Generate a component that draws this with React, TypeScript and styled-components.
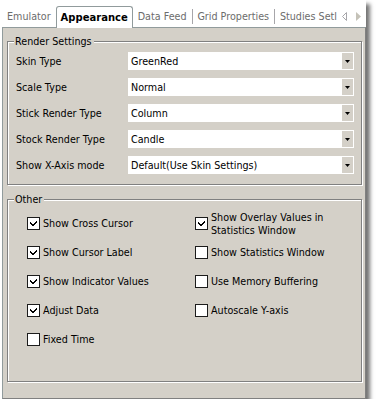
import React from 'react';
import styled, { createGlobalStyle } from 'styled-components';

const GlobalStyle = createGlobalStyle`
  html, body {
    margin: 0;
    padding: 0;
    background: #ffffff;
  }
  body {
    font-family: "DejaVu Sans", "Liberation Sans", sans-serif;
    font-size: 9.6px;
    color: #000;
  }
`;

const Window = styled.div`
  width: 366px;
  height: 399px;
  display: flex;
  flex-direction: column;
  background: #ffffff;
  box-shadow: 4px 4px 4px rgba(0, 0, 0, 0.55);
`;

const TabStrip = styled.div`
  height: 27px;
  display: flex;
  align-items: flex-end;
  padding-left: 2px;
  box-sizing: border-box;
`;

const Tab = styled.div`
  height: 21px;
  display: flex;
  align-items: center;
  padding: 0 5px;
  color: #6c6c6c;
  white-space: nowrap;
  box-sizing: border-box;
`;

const ActiveTab = styled.div`
  height: 22px;
  display: flex;
  align-items: center;
  padding: 0 4px 1px;
  background: #ffffff;
  border: 1px solid #919b9c;
  border-bottom: none;
  border-radius: 3px 3px 0 0;
  font-weight: bold;
  font-size: 10px;
  color: #000;
  box-sizing: border-box;
  margin-bottom: -1px;
  position: relative;
  z-index: 1;
`;

const TabSep = styled.div`
  width: 1px;
  height: 15px;
  margin-bottom: 3px;
  background: #a7a6aa;
`;

const Scroller = styled.div`
  margin-left: auto;
  display: flex;
  gap: 9px;
  align-items: center;
  height: 21px;
  padding-right: 5px;
`;

const Panel = styled.div`
  flex: 1;
  margin-left: 2px;
  background: #d4d0c8;
  border: 1px solid #919b9c;
  border-right-color: #808080;
  border-bottom-color: #808080;
  padding: 0 3px 0 4px;
  box-sizing: border-box;
`;

const Group = styled.div<{ $top: number; $height: number }>`
  position: relative;
  margin-top: ${(p) => p.$top}px;
  height: ${(p) => p.$height}px;
  width: 355px;
  box-sizing: border-box;
  border: 1px solid #808080;
  box-shadow: 1px 1px 0 #ffffff, inset 1px 1px 0 #ffffff;
`;

const Legend = styled.span`
  position: absolute;
  top: -7px;
  left: 6px;
  padding: 0 2px 0 1px;
  background: #d4d0c8;
  line-height: 13px;
`;

const FieldGrid = styled.div`
  display: grid;
  grid-template-columns: 112px 226px;
  row-gap: 8px;
  padding: 10px 0 0 8px;
`;

const Label = styled.div`
  height: 18px;
  display: flex;
  align-items: center;
`;

const Combo = styled.div`
  height: 18px;
  background: #ffffff;
  display: flex;
  align-items: center;
  padding: 1px 1px 1px 3px;
  box-sizing: border-box;
`;

const ComboText = styled.span`
  flex: 1;
  white-space: nowrap;
  overflow: hidden;
`;

const DropButton = styled.div`
  width: 11px;
  height: 100%;
  background: #d4d0c8;
  display: flex;
  align-items: center;
  justify-content: center;
`;

const CheckGrid = styled.div`
  display: grid;
  grid-template-columns: 168px 1fr;
  grid-auto-rows: 29px;
  padding: 9px 0 0 19px;
`;

const CheckItem = styled.div`
  display: flex;
  align-items: center;
  gap: 3px;
  line-height: 13px;
`;

const Combos = [
  ['Skin Type', 'GreenRed'],
  ['Scale Type', 'Normal'],
  ['Stick Render Type', 'Column'],
  ['Stock Render Type', 'Candle'],
  ['Show X-Axis mode', 'Default(Use Skin Settings)'],
];

const Checks: [React.ReactNode, boolean][] = [
  ['Show Cross Cursor', true],
  [<>Show Overlay Values in<br />Statistics Window</>, true],
  ['Show Cursor Label', true],
  ['Show Statistics Window', false],
  ['Show Indicator Values', true],
  ['Use Memory Buffering', false],
  ['Adjust Data', true],
  ['Autoscale Y-axis', false],
  ['Fixed Time', false],
];

const Box: React.FC<{ checked: boolean }> = ({ checked }) => (
  <svg width="13" height="13" viewBox="0 0 13 13" style={{ flex: 'none' }}>
    <rect x="0.5" y="0.5" width="12" height="12" fill="#fff" stroke="#1c1c1c" />
    {checked && (
      <path d="M3 5v2l2 2h1l4-4V3L6 7H5L3 5z" fill="#000" shapeRendering="crispEdges" />
    )}
  </svg>
);

const Arrow: React.FC<{ left?: boolean }> = ({ left }) => (
  <svg width="5" height="9" viewBox="0 0 5 9">
    {left ? (
      <path d="M4.5 0.5L0.5 4.5L4.5 8.5Z" fill="none" stroke="#a7a6aa" />
    ) : (
      <path d="M0 0L5 4.5L0 9Z" fill="#c5c2b8" />
    )}
  </svg>
);

export default function App() {
  return (
    <>
      <GlobalStyle />
      <Window>
        <TabStrip>
          <Tab>Emulator</Tab>
          <ActiveTab>Appearance</ActiveTab>
          <Tab>Data Feed</Tab>
          <TabSep />
          <Tab>Grid Properties</Tab>
          <TabSep />
          <Tab>Studies Setl</Tab>
          <Scroller>
            <Arrow left />
            <Arrow />
          </Scroller>
        </TabStrip>
        <Panel>
          <Group $top={13} $height={144}>
            <Legend>Render Settings</Legend>
            <FieldGrid>
              {Combos.map(([label, value]) => (
                <React.Fragment key={label}>
                  <Label>{label}</Label>
                  <Combo>
                    <ComboText>{value}</ComboText>
                    <DropButton>
                      <svg width="5" height="3" viewBox="0 0 5 3">
                        <path d="M0 0h5L2.5 3z" fill="#000" />
                      </svg>
                    </DropButton>
                  </Combo>
                </React.Fragment>
              ))}
            </FieldGrid>
          </Group>
          <Group $top={14} $height={183}>
            <Legend>Other</Legend>
            <CheckGrid>
              {Checks.map(([text, checked], i) => (
                <CheckItem key={i}>
                  <Box checked={checked} />
                  <span>{text}</span>
                </CheckItem>
              ))}
            </CheckGrid>
          </Group>
        </Panel>
      </Window>
    </>
  );
}
